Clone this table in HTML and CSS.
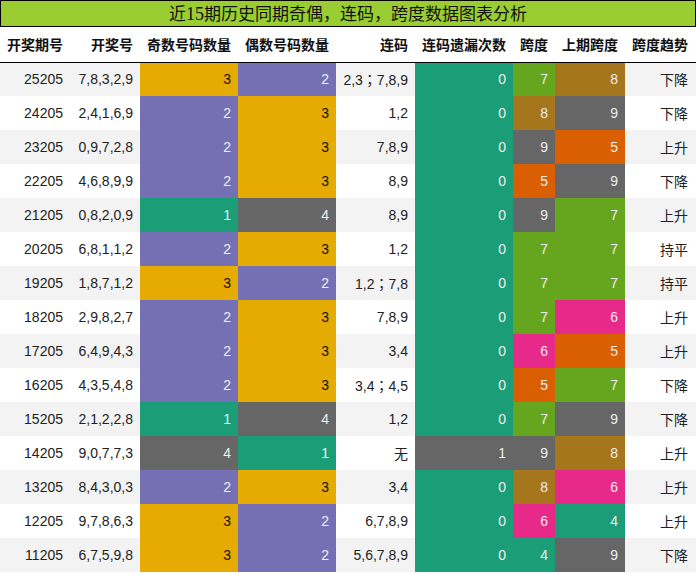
FILE: index.html
```html
<!DOCTYPE html>
<html lang="zh">
<head>
<meta charset="utf-8">
<title>近15期历史同期奇偶，连码，跨度数据图表分析</title>
<link rel="stylesheet" href="styles.css">
</head>
<body>
<div class="title">近<span class="num">15</span>期历史同期奇偶，连码，跨度数据图表分析</div>
<table class="grid">
<colgroup>
<col class="w70"><col class="w70"><col class="w98"><col class="w98"><col class="w79"><col class="w98"><col class="w42"><col class="w70"><col class="w71">
</colgroup>
<thead>
<tr><th>开奖期号</th><th>开奖号</th><th>奇数号码数量</th><th>偶数号码数量</th><th>连码</th><th>连码遗漏次数</th><th>跨度</th><th>上期跨度</th><th>跨度趋势</th></tr>
</thead>
<tbody>
<tr><td>25205</td><td>7,8,3,2,9</td><td class="y">3</td><td class="p">2</td><td>2,3<span class="sep">；</span>7,8,9</td><td class="t">0</td><td class="g">7</td><td class="b">8</td><td>下降</td></tr>
<tr><td>24205</td><td>2,4,1,6,9</td><td class="p">2</td><td class="y">3</td><td>1,2</td><td class="t">0</td><td class="b">8</td><td class="k">9</td><td>下降</td></tr>
<tr><td>23205</td><td>0,9,7,2,8</td><td class="p">2</td><td class="y">3</td><td>7,8,9</td><td class="t">0</td><td class="k">9</td><td class="o">5</td><td>上升</td></tr>
<tr><td>22205</td><td>4,6,8,9,9</td><td class="p">2</td><td class="y">3</td><td>8,9</td><td class="t">0</td><td class="o">5</td><td class="k">9</td><td>下降</td></tr>
<tr><td>21205</td><td>0,8,2,0,9</td><td class="t">1</td><td class="k">4</td><td>8,9</td><td class="t">0</td><td class="k">9</td><td class="g">7</td><td>上升</td></tr>
<tr><td>20205</td><td>6,8,1,1,2</td><td class="p">2</td><td class="y">3</td><td>1,2</td><td class="t">0</td><td class="g">7</td><td class="g">7</td><td>持平</td></tr>
<tr><td>19205</td><td>1,8,7,1,2</td><td class="y">3</td><td class="p">2</td><td>1,2<span class="sep">；</span>7,8</td><td class="t">0</td><td class="g">7</td><td class="g">7</td><td>持平</td></tr>
<tr><td>18205</td><td>2,9,8,2,7</td><td class="p">2</td><td class="y">3</td><td>7,8,9</td><td class="t">0</td><td class="g">7</td><td class="m">6</td><td>上升</td></tr>
<tr><td>17205</td><td>6,4,9,4,3</td><td class="p">2</td><td class="y">3</td><td>3,4</td><td class="t">0</td><td class="m">6</td><td class="o">5</td><td>上升</td></tr>
<tr><td>16205</td><td>4,3,5,4,8</td><td class="p">2</td><td class="y">3</td><td>3,4<span class="sep">；</span>4,5</td><td class="t">0</td><td class="o">5</td><td class="g">7</td><td>下降</td></tr>
<tr><td>15205</td><td>2,1,2,2,8</td><td class="t">1</td><td class="k">4</td><td>1,2</td><td class="t">0</td><td class="g">7</td><td class="k">9</td><td>下降</td></tr>
<tr><td>14205</td><td>9,0,7,7,3</td><td class="k">4</td><td class="t">1</td><td>无</td><td class="k">1</td><td class="k">9</td><td class="b">8</td><td>上升</td></tr>
<tr><td>13205</td><td>8,4,3,0,3</td><td class="p">2</td><td class="y">3</td><td>3,4</td><td class="t">0</td><td class="b">8</td><td class="m">6</td><td>上升</td></tr>
<tr><td>12205</td><td>9,7,8,6,3</td><td class="y">3</td><td class="p">2</td><td>6,7,8,9</td><td class="t">0</td><td class="m">6</td><td class="t">4</td><td>上升</td></tr>
<tr><td>11205</td><td>6,7,5,9,8</td><td class="y">3</td><td class="p">2</td><td>5,6,7,8,9</td><td class="t">0</td><td class="t">4</td><td class="k">9</td><td>下降</td></tr>
</tbody>
</table>
</body>
</html>
```
FILE: styles.css
```css
html, body {
  margin: 0;
  padding: 0;
  background: #fff;
}
body {
  width: 696px;
  font-family: "Liberation Sans", "Noto Sans CJK SC", sans-serif;
  font-size: 14px;
  color: #222;
}
.title {
  box-sizing: border-box;
  height: 27px;
  background: #9acd32;
  border: 1px solid #000;
  text-align: center;
  font-family: "Noto Sans CJK SC", sans-serif;
  font-size: 17px;
  line-height: 24px;
  color: #111;
}
.title .num {
  font-family: "Liberation Serif", serif;
  font-size: 18px;
}
.sep {
  font-family: "Noto Sans CJK JP", sans-serif;
}
.grid {
  width: 696px;
  border-collapse: collapse;
  table-layout: fixed;
}
.w70 { width: 70px; }
.w98 { width: 98px; }
.w79 { width: 79px; }
.w42 { width: 42px; }
.w71 { width: 71px; }
.grid th {
  height: 35px;
  padding: 0 7px 0 0;
  text-align: right;
  font-weight: bold;
  color: #111;
  border-bottom: 1px solid #000;
  white-space: nowrap;
  box-sizing: border-box;
}
.grid td {
  height: 34px;
  padding: 0 7px 0 0;
  text-align: right;
  white-space: nowrap;
  box-sizing: border-box;
}
.grid th:last-child,
.grid td:last-child {
  padding-right: 8px;
}
.grid tbody tr:nth-child(odd) { background: #f3f3f3; }
.grid tbody tr:nth-child(even) { background: #fff; }
.grid td.y { background: #e6ab02; color: #111; }
.grid td.p { background: #7570b3; color: #eee; }
.grid td.t { background: #1b9e77; color: #eee; }
.grid td.k { background: #666666; color: #eee; }
.grid td.g { background: #66a61e; color: #eee; }
.grid td.b { background: #a6761d; color: #eee; }
.grid td.o { background: #d95f02; color: #eee; }
.grid td.m { background: #e7298a; color: #eee; }
```
